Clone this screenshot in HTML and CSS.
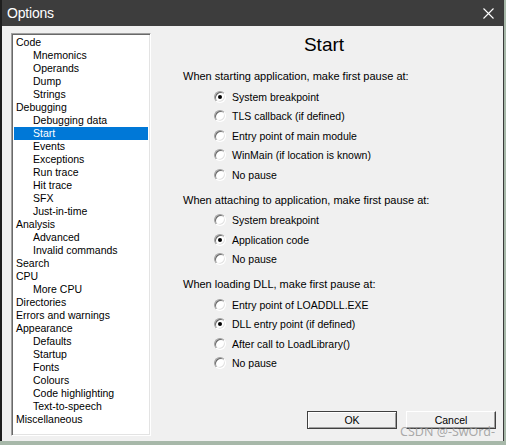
FILE: index.html
```html
<!DOCTYPE html>
<html>
<head>
<meta charset="utf-8">
<title>Options</title>
<link rel="stylesheet" href="styles.css">
</head>
<body>
<div class="window">
  <div class="titlebar">
    <span class="title">Options</span>
    <svg class="close" width="11" height="11" viewBox="0 0 11 11"><path d="M0.5 0.5 L10.5 10.5 M10.5 0.5 L0.5 10.5" stroke="#ffffff" stroke-width="1.1" fill="none"/></svg>
  </div>
  <div class="content">
    <div class="tree">
      <div class="node">Code</div>
      <div class="node child">Mnemonics</div>
      <div class="node child">Operands</div>
      <div class="node child">Dump</div>
      <div class="node child">Strings</div>
      <div class="node">Debugging</div>
      <div class="node child">Debugging data</div>
      <div class="node child selected">Start</div>
      <div class="node child">Events</div>
      <div class="node child">Exceptions</div>
      <div class="node child">Run trace</div>
      <div class="node child">Hit trace</div>
      <div class="node child">SFX</div>
      <div class="node child">Just-in-time</div>
      <div class="node">Analysis</div>
      <div class="node child">Advanced</div>
      <div class="node child">Invalid commands</div>
      <div class="node">Search</div>
      <div class="node">CPU</div>
      <div class="node child">More CPU</div>
      <div class="node">Directories</div>
      <div class="node">Errors and warnings</div>
      <div class="node">Appearance</div>
      <div class="node child">Defaults</div>
      <div class="node child">Startup</div>
      <div class="node child">Fonts</div>
      <div class="node child">Colours</div>
      <div class="node child">Code highlighting</div>
      <div class="node child">Text-to-speech</div>
      <div class="node">Miscellaneous</div>
    </div>
    <div class="panel">
      <div class="panel-title">Start</div>
      <div class="section">
        <div class="section-head">When starting application, make first pause at:</div>
        <div class="option"><span class="radio checked"></span><span>System breakpoint</span></div>
        <div class="option"><span class="radio"></span><span>TLS callback (if defined)</span></div>
        <div class="option"><span class="radio"></span><span>Entry point of main module</span></div>
        <div class="option"><span class="radio"></span><span>WinMain (if location is known)</span></div>
        <div class="option"><span class="radio"></span><span>No pause</span></div>
      </div>
      <div class="section">
        <div class="section-head">When attaching to application, make first pause at:</div>
        <div class="option"><span class="radio"></span><span>System breakpoint</span></div>
        <div class="option"><span class="radio checked"></span><span>Application code</span></div>
        <div class="option"><span class="radio"></span><span>No pause</span></div>
      </div>
      <div class="section">
        <div class="section-head">When loading DLL, make first pause at:</div>
        <div class="option"><span class="radio"></span><span>Entry point of LOADDLL.EXE</span></div>
        <div class="option"><span class="radio checked"></span><span>DLL entry point (if defined)</span></div>
        <div class="option"><span class="radio"></span><span>After call to LoadLibrary()</span></div>
        <div class="option"><span class="radio"></span><span>No pause</span></div>
      </div>
      <div class="buttons">
        <div class="btn default">OK</div>
        <div class="btn">Cancel</div>
      </div>
    </div>
  </div>
  <div class="watermark">CSDN @-SwOrd-</div>
</div>
</body>
</html>
```

FILE: styles.css
```css
html, body {
  margin: 0;
  padding: 0;
}
body {
  background: #a7b8a9;
  width: 506px;
  height: 445px;
  overflow: hidden;
  font-family: "Liberation Sans", Arial, sans-serif;
  font-size: 10.5px;
  color: #000;
}
.window {
  position: relative;
  width: 501px;
  height: 441px;
  border-left: 2px solid #1e1e1e;
  border-right: 1px solid #3a3a3a;
  background: #f0f0f0;
  display: flex;
  flex-direction: column;
}
.titlebar {
  height: 26px;
  background: #3d3d3d;
  display: flex;
  align-items: center;
  justify-content: space-between;
  padding: 0 9px 0 5px;
  flex: none;
}
.title {
  color: #ffffff;
  font-family: "Liberation Sans", Arial, sans-serif;
  font-size: 14px;
  letter-spacing: -0.2px;
}
.close {
  display: block;
}
.content {
  flex: 1;
  display: flex;
  padding: 7px 0 5px 9px;
  min-height: 0;
}
.tree {
  flex: none;
  background: #ffffff;
  border: 1px solid;
  border-color: #a0a0a0 #ffffff #ffffff #a0a0a0;
  box-shadow: inset 1px 1px 0 #696969, inset -1px -1px 0 #e3e3e3;
  padding: 2px 2px;
  box-sizing: content-box;
  width: 134px;
}
.node {
  height: 13px;
  line-height: 13px;
  padding-left: 2px;
  white-space: nowrap;
}
.node.child {
  padding-left: 19px;
}
.node.selected {
  background: #0078d7;
  color: #ffffff;
}
.panel {
  flex: 1;
  display: flex;
  flex-direction: column;
  margin-right: 6px;
  padding-left: 32px;
  padding-top: 1px;
}
.panel-title {
  font-size: 19px;
  line-height: 22px;
  height: 22px;
  text-align: center;
  margin-left: -32px;
  margin-bottom: 10px;
}
.section {
  margin-bottom: 5px;
}
.section-head {
  height: 20px;
  line-height: 20px;
  margin-bottom: 1px;
  font-size: 11px;
  white-space: nowrap;
}
.option {
  height: 19.5px;
  display: flex;
  align-items: center;
  padding-left: 31px;
  gap: 6px;
  white-space: nowrap;
}
.radio {
  position: relative;
  width: 10px;
  height: 10px;
  flex: none;
  border-radius: 50%;
  background: #ffffff;
  border: 1px solid;
  border-color: #a0a0a0 #ffffff #ffffff #a0a0a0;
  box-shadow: inset 1px 1px 0 #696969, inset -1px -1px 0 #e3e3e3;
}
.radio.checked::after {
  content: "";
  position: absolute;
  left: 3px;
  top: 3px;
  width: 4px;
  height: 4px;
  border-radius: 50%;
  background: #000000;
}
.buttons {
  margin-top: auto;
  display: flex;
  justify-content: flex-end;
  gap: 9px;
  padding-right: 1px;
  margin-bottom: 7px;
}
.btn {
  width: 88px;
  height: 16px;
  line-height: 16px;
  text-align: center;
  background: #f0f0f0;
  border: 1px solid;
  border-color: #ffffff #404040 #404040 #ffffff;
  box-shadow: inset -1px -1px 0 #a0a0a0;
}
.btn.default {
  border-color: #404040;
  box-shadow: inset 1px 1px 0 #ffffff, inset -1px -1px 0 #a0a0a0;
}
.watermark {
  position: absolute;
  left: 398px;
  top: 423px;
  font-family: "Noto Sans", "Liberation Sans", sans-serif;
  font-size: 12.5px;
  color: rgba(150, 150, 150, 0.8);
  white-space: nowrap;
}
```
